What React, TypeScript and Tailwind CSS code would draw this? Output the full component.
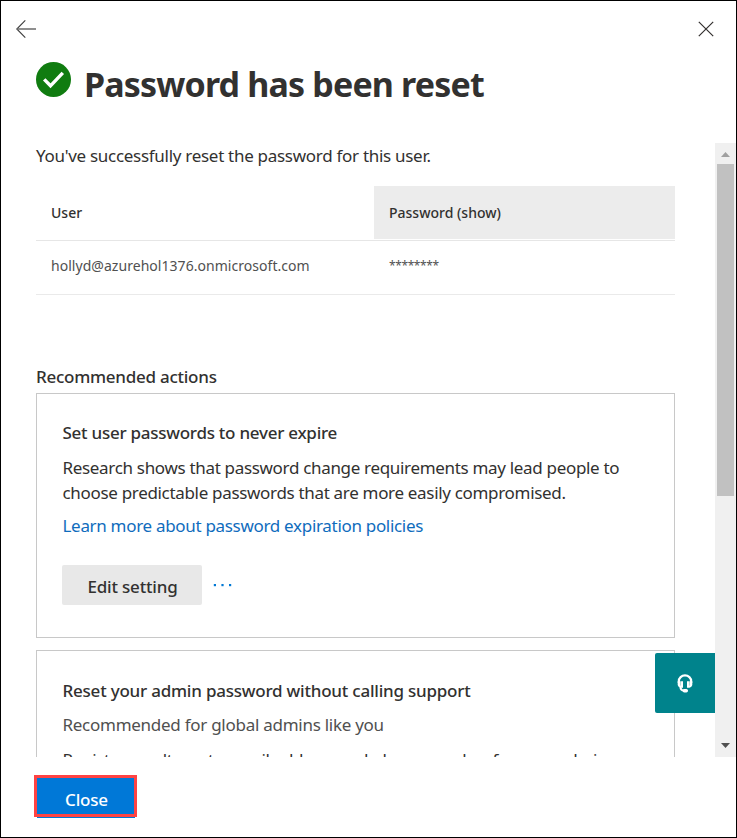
function BackArrow() {
  return (
    <svg width="20" height="18" viewBox="0 0 20 18" fill="none" stroke="#404040" strokeWidth="1.15">
      <path d="M9.3 0.4 0.8 9l8.5 8.6" />
      <path d="M1 9h19" stroke="#6a6a6a" strokeWidth="1.5" />
    </svg>
  );
}

function CloseIcon() {
  return (
    <svg width="16" height="16" viewBox="0 0 16 16" fill="none" stroke="#33302f" strokeWidth="1.2">
      <path d="M0.8 0.8 15.2 15.2M15.2 0.8 0.8 15.2" />
    </svg>
  );
}

function SuccessIcon() {
  return (
    <svg width="35" height="35" viewBox="0 0 35 35" fill="none">
      <circle cx="17.5" cy="17.5" r="17.5" fill="#107c10" />
      <path d="M8.2 17.4 14.5 23.8 26.8 10.8" stroke="#fff" strokeWidth="3.4" />
    </svg>
  );
}

function HeadsetIcon() {
  return (
    <svg width="16" height="19" viewBox="0 0 16 19" fill="none">
      <path d="M1.8 9V7.4A6.2 6 0 0 1 14.2 7.4V9" stroke="#fff" strokeWidth="2.2" />
      <path d="M0.7 7.2H6V13.8H3.8C1.7 13.4 0.7 11.8 0.7 10.2Z" fill="#fff" />
      <path d="M15.3 7.2H10V13.8H12.2C14.3 13.4 15.3 11.8 15.3 10.2Z" fill="#fff" />
      <path d="M3.4 12.5C3.4 15 4.8 16.6 7 16.6" stroke="#fff" strokeWidth="2" />
      <rect x="5.6" y="14.9" width="5.4" height="3.5" rx="1.7" fill="#fff" />
      <path d="M3.6 7v4.6M12.4 7v4.6" stroke="#00838c" strokeOpacity="0.4" strokeWidth="0.8" />
    </svg>
  );
}

function Scrollbar() {
  return (
    <div className="flex w-[21px] shrink-0 flex-col items-center bg-[#f0f0f0]">
      <div className="flex h-[21px] w-full shrink-0 items-center justify-center">
        <svg width="9" height="5" viewBox="0 0 9 5" className="mt-0.5">
          <path d="M0 5 4.5 0 9 5Z" fill="#a0a0a0" />
        </svg>
      </div>
      <div className="h-[332px] w-[17px] bg-[#c1c1c1]" />
      <div className="flex-1" />
      <div className="flex h-[21px] w-full shrink-0 items-center justify-center">
        <svg width="9" height="5" viewBox="0 0 9 5" className="-mt-0.5">
          <path d="M0 0 4.5 5 9 0Z" fill="#505050" />
        </svg>
      </div>
    </div>
  );
}

export default function App() {
  return (
    <div className="flex h-[838px] w-[737px] flex-col overflow-hidden border border-black bg-white font-['Noto_Sans',sans-serif] text-[17px] leading-[25px] text-[#323130]">
      <header className="flex h-[142px] shrink-0 flex-col">
        <div className="flex justify-between pt-[19px] pr-[22px] pl-[15px]">
          <button aria-label="Back">
            <BackArrow />
          </button>
          <button aria-label="Close panel">
            <CloseIcon />
          </button>
        </div>
        <div className="flex items-start gap-[13px] pt-6 pl-[35px]">
          <SuccessIcon />
          <h1 className="pt-0.5 text-[34px] leading-[40px] font-bold tracking-[-0.84px] whitespace-nowrap">
            Password has been reset
          </h1>
        </div>
      </header>

      <div className="relative flex h-[614px] shrink-0">
        <main className="flex-1 overflow-hidden pr-10 pl-[35px] whitespace-nowrap">
          <p className="h-[43px] pt-px leading-6 tracking-[-0.29px]">You've successfully reset the password for this user.</p>

          <div className="text-sm">
            <div className="flex h-[55px] border-b border-[#e6e6e6] pb-px font-medium">
              <div className="flex w-[338px] items-center pl-[15px]">User</div>
              <div className="flex flex-1 items-center bg-[#ececec] pl-[15px]">Password (show)</div>
            </div>
            <div className="flex h-[54px] items-center border-b border-[#eaeaea] pb-[3px] text-[#505050]">
              <div className="w-[338px] pl-[15px] tracking-[0.04px]">hollyd@azurehol1376.onmicrosoft.com</div>
              <div className="pl-[15px] text-xs tracking-[-0.4px]">********</div>
            </div>
          </div>

          <h2 className="mt-[69px] h-[29px] pt-px leading-6 font-medium tracking-[-0.26px]">Recommended actions</h2>

          <section className="h-[245px] border border-[#c8c8c8] px-[25px] pt-[26px]">
            <h3 className="pl-[0.5px] font-medium tracking-[-0.26px]">Set user passwords to never expire</h3>
            <p className="mt-2.5 pl-[0.5px] tracking-[-0.32px]">
              Research shows that password change requirements may lead people to
              <br />
              choose predictable passwords that are more easily compromised.
            </p>
            <p className="mt-2 pl-[0.5px] tracking-[-0.31px] text-[#0f6cbd]">Learn more about password expiration policies</p>
            <div className="mt-[27px] flex items-center">
              <button className="flex h-10 w-[140px] items-center justify-center rounded-xs bg-[#e8e8e8] pt-0.5 pl-px font-medium tracking-[-0.18px]">
                Edit setting
              </button>
              <svg width="20" height="3" viewBox="0 0 20 3" fill="#0078d4" className="ml-[11px]">
                <rect x="0.8" y="0" width="2.2" height="2.2" />
                <rect x="8.4" y="0" width="2.2" height="2.2" />
                <rect x="16" y="0" width="2.2" height="2.2" />
              </svg>
            </div>
          </section>

          <section className="mt-3 h-[245px] border border-[#c8c8c8] px-[25px] pt-[27px]">
            <h3 className="pl-[0.5px] font-medium tracking-[-0.22px]">Reset your admin password without calling support</h3>
            <p className="mt-[9px] pl-[0.5px] tracking-[-0.27px] text-[#505050]">Recommended for global admins like you</p>
            <p className="mt-2.5 pl-[0.5px] tracking-[-0.31px]">
              Register an alternate email address and phone number for your admin
            </p>
          </section>
        </main>
        <Scrollbar />
        <button
          aria-label="Support"
          className="absolute top-[510px] right-[21px] flex size-[60px] items-center justify-center rounded-l-xs bg-[#00838c]"
        >
          <HeadsetIcon />
        </button>
      </div>

      <footer className="flex pt-[18px] pl-[33px]">
        <div className="h-[42px] w-[103px] border-3 border-[#ff4343] bg-[#0078d7]">
          <button className="flex h-full w-full items-center justify-center pt-[7px] pl-0.5 font-medium tracking-[-0.2px] text-white">
            Close
          </button>
          <div className="mt-[3px] h-px w-[98px] bg-[#0078d7]" />
        </div>
      </footer>
    </div>
  );
}
